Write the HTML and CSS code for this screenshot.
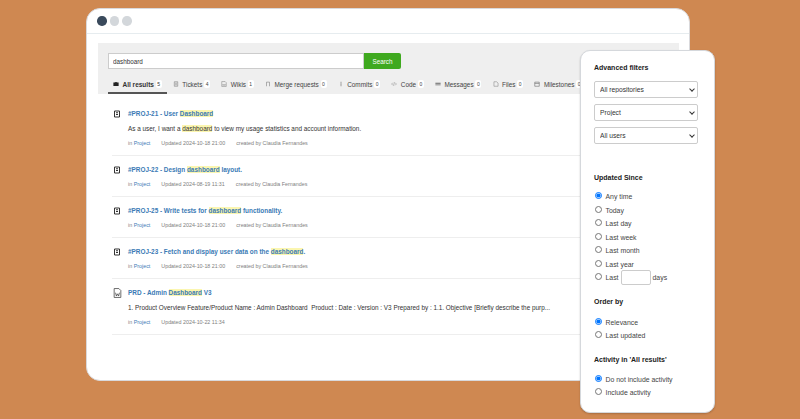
FILE: index.html
```html
<!DOCTYPE html>
<html lang="en">
<head>
    <meta charset="UTF-8">
    <title>Search results</title>
    <link rel="stylesheet" href="styles.css">
</head>
<body>
    <div class="window">
        <div class="titlebar">
            <span class="dot dark"></span>
            <span class="dot"></span>
            <span class="dot"></span>
        </div>
        <div class="content">
            <div class="search-panel">
                <form class="search-form">
                    <input class="search-input" type="text" value="dashboard">
                    <button class="search-button" type="button">Search</button>
                </form>
                <div class="tabs">
                    <a class="tab active">
                        <svg class="tab-icon" viewBox="0 0 16 16"><path fill="#222" d="M5 4V2.500h6V4h4v9.500H1V4zm1.500 0h3V3.500h-3z"/></svg>
                        All results <span class="count">5</span>
                    </a>
                    <a class="tab">
                        <svg class="tab-icon" viewBox="0 0 16 16"><path fill="none" stroke="#777" stroke-width="1.500" d="M3.500 2h9v12h-9zM6 5.500h4M6 8h4M6 10.500h4"/></svg>
                        Tickets <span class="count">4</span>
                    </a>
                    <a class="tab">
                        <svg class="tab-icon" viewBox="0 0 16 16"><path fill="none" stroke="#777" stroke-width="1.300" d="M2 1.500h9l3 3v10H2zM4.500 8l1.300 4L8 9l2.200 3 1.300-4"/></svg>
                        Wikis <span class="count">1</span>
                    </a>
                    <a class="tab">
                        <svg class="tab-icon" viewBox="0 0 16 16"><path fill="none" stroke="#777" stroke-width="1.500" d="M4 14V3h8v11"/></svg>
                        Merge requests <span class="count">0</span>
                    </a>
                    <a class="tab">
                        <svg class="tab-icon" viewBox="0 0 16 16"><path fill="none" stroke="#777" stroke-width="1.800" d="M8 2v4.500M8 9.500V14"/><circle cx="8" cy="8" r="1.500" fill="#777"/></svg>
                        Commits <span class="count">0</span>
                    </a>
                    <a class="tab">
                        <svg class="tab-icon" viewBox="0 0 16 16"><path fill="none" stroke="#888" stroke-width="1.400" d="M5 4.500L1.500 8 5 11.500M11 4.500L14.500 8 11 11.500M9.300 3.500l-2.600 9"/></svg>
                        Code <span class="count">0</span>
                    </a>
                    <a class="tab">
                        <svg class="tab-icon" viewBox="0 0 16 16"><path fill="#666" d="M1 4.500h14v2.500H1zM1 9h14v2.500H1z"/></svg>
                        Messages <span class="count">0</span>
                    </a>
                    <a class="tab">
                        <svg class="tab-icon" viewBox="0 0 16 16"><path fill="none" stroke="#777" stroke-width="1.300" d="M2.500 2h7l4 3.500V14h-11z"/></svg>
                        Files <span class="count">0</span>
                    </a>
                    <a class="tab">
                        <svg class="tab-icon" viewBox="0 0 16 16"><path fill="none" stroke="#666" stroke-width="1.500" d="M2 3h12v11H2zM2 6.500h12"/></svg>
                        Milestones <span class="count">0</span>
                    </a>
                </div>
            </div>

            <div class="results">
                <div class="result">
                    <svg class="result-icon" viewBox="0 0 16 16"><path fill="none" stroke="#333" stroke-width="2" d="M3 2h10v12H3zM6 5.500h4M6 9h4"/></svg>
                    <div class="result-body">
                        <a class="result-title">#PROJ-21 - User <mark>Dashboard</mark></a>
                        <p class="snippet">As a user, I want a <mark>dashboard</mark> to view my usage statistics and account information.</p>
                        <p class="meta"><span>in <a>Project</a></span><span>Updated 2024-10-18 21:00</span><span>created by Claudia Fernandes</span></p>
                    </div>
                </div>
                <div class="result">
                    <svg class="result-icon" viewBox="0 0 16 16"><path fill="none" stroke="#333" stroke-width="2" d="M3 2h10v12H3zM6 5.500h4M6 9h4"/></svg>
                    <div class="result-body">
                        <a class="result-title">#PROJ-22 - Design <mark>dashboard</mark> layout.</a>
                        <p class="meta"><span>in <a>Project</a></span><span>Updated 2024-08-19 11:31</span><span>created by Claudia Fernandes</span></p>
                    </div>
                </div>
                <div class="result">
                    <svg class="result-icon" viewBox="0 0 16 16"><path fill="none" stroke="#333" stroke-width="2" d="M3 2h10v12H3zM6 5.500h4M6 9h4"/></svg>
                    <div class="result-body">
                        <a class="result-title">#PROJ-25 - Write tests for <mark>dashboard</mark> functionality.</a>
                        <p class="meta"><span>in <a>Project</a></span><span>Updated 2024-10-18 21:00</span><span>created by Claudia Fernandes</span></p>
                    </div>
                </div>
                <div class="result">
                    <svg class="result-icon" viewBox="0 0 16 16"><path fill="none" stroke="#333" stroke-width="2" d="M3 2h10v12H3zM6 5.500h4M6 9h4"/></svg>
                    <div class="result-body">
                        <a class="result-title">#PROJ-23 - Fetch and display user data on the <mark>dashboard</mark>.</a>
                        <p class="meta"><span>in <a>Project</a></span><span>Updated 2024-10-18 21:00</span><span>created by Claudia Fernandes</span></p>
                    </div>
                </div>
                <div class="result">
                    <svg class="result-icon wiki-icon" viewBox="0 0 16 18"><path fill="none" stroke="#444" stroke-width="1.400" d="M2 1h8.500L14 4.500V17H2zM4.500 8.500l1.500 6L8 10.500l2 4 1.500-6"/></svg>
                    <div class="result-body">
                        <a class="result-title">PRD - Admin <mark>Dashboard</mark> V3</a>
                        <p class="snippet">1. Product Overview Feature/Product Name : Admin Dashboard&nbsp; Product : Date : Version : V3 Prepared by : 1.1. Objective [Briefly describe the purp...</p>
                        <p class="meta"><span>in <a>Project</a></span><span>Updated 2024-10-22 11:34</span></p>
                    </div>
                </div>
            </div>
        </div>
    </div>

    <aside class="filters">
        <h3 class="filter-title first">Advanced filters</h3>
        <div class="select-wrap"><select class="filter-select"><option>All repositories</option></select></div>
        <div class="select-wrap"><select class="filter-select"><option>Project</option></select></div>
        <div class="select-wrap"><select class="filter-select"><option>All users</option></select></div>

        <h3 class="filter-title since">Updated Since</h3>
        <div class="radio-group">
            <label class="radio"><input type="radio" name="since" checked>Any time</label>
            <label class="radio"><input type="radio" name="since">Today</label>
            <label class="radio"><input type="radio" name="since">Last day</label>
            <label class="radio"><input type="radio" name="since">Last week</label>
            <label class="radio"><input type="radio" name="since">Last month</label>
            <label class="radio"><input type="radio" name="since">Last year</label>
            <label class="radio"><input type="radio" name="since">Last<span class="days-box"></span>days</label>
        </div>

        <h3 class="filter-title order">Order by</h3>
        <div class="radio-group">
            <label class="radio"><input type="radio" name="order" checked>Relevance</label>
            <label class="radio"><input type="radio" name="order">Last updated</label>
        </div>

        <h3 class="filter-title activity">Activity in 'All results'</h3>
        <div class="radio-group">
            <label class="radio"><input type="radio" name="activity" checked>Do not include activity</label>
            <label class="radio"><input type="radio" name="activity">Include activity</label>
        </div>
    </aside>
</body>
</html>
```

FILE: styles.css
```css
* {
    box-sizing: border-box;
    margin: 0;
    padding: 0;
}

html, body {
    height: 100%;
    overflow: hidden;
}

body {
    background-color: #cf8851;
    font-family: "Liberation Sans", Arial, sans-serif;
    color: #333;
    padding: 8px 0 0 86px;
}

.window {
    width: 604px;
    height: 373px;
    background-color: #fff;
    border: 1px solid #d9d9dc;
    border-radius: 14px;
    overflow: hidden;
}

.titlebar {
    height: 25px;
    display: flex;
    align-items: center;
    gap: 3px;
    padding-left: 10px;
    border-bottom: 1px solid #e6ecef;
}

.dot {
    width: 9.500px;
    height: 9.500px;
    border-radius: 50%;
    background-color: #d3d7db;
}

.dot.dark {
    background-color: #3a4a5c;
}

.content {
    padding: 9px 10px 0 11px;
}

.search-panel {
    height: 51px;
    background-color: #efefef;
    padding: 10px 0 0 10px;
    overflow: hidden;
}

.search-form {
    display: flex;
    height: 16px;
}

.search-input {
    width: 256px;
    height: 16px;
    border: 1px solid #ccc;
    background-color: #fff;
    padding: 0 4px;
    font-family: inherit;
    font-size: 6.300px;
    color: #333;
}

.search-button {
    width: 37px;
    height: 16px;
    border: none;
    border-radius: 0 2px 2px 0;
    background-color: #3fa91f;
    color: #fff;
    font-family: inherit;
    font-size: 6.300px;
}

.tabs {
    display: flex;
    height: 25px;
    white-space: nowrap;
}

.tab {
    display: flex;
    align-items: center;
    gap: 3.500px;
    padding: 7px 5px 0;
    margin-right: 1.200px;
    font-size: 6.400px;
    color: #444;
    border-bottom: 2px solid transparent;
}

.tab.active {
    font-size: 6.500px;
    font-weight: bold;
    color: #333;
    border-bottom-color: #555;
}

.tab-icon {
    width: 6px;
    height: 6px;
    flex-shrink: 0;
}

.count {
    min-width: 6px;
    margin-left: -1.800px;
    background-color: #fff;
    border-radius: 2px;
    font-size: 5px;
    font-weight: normal;
    text-align: center;
    line-height: 8px;
}

.results {
    padding: 14px 0 0 14px;
}

.result {
    display: flex;
    gap: 7px;
    padding-bottom: 5px;
    margin-bottom: 8px;
    border-bottom: 1px solid #eee;
}

.result-icon {
    width: 8px;
    height: 8px;
    margin: 2px 0 0 1px;
    flex-shrink: 0;
}

.wiki-icon {
    width: 9px;
    height: 10px;
    margin: 1px -1px 0 1px;
}

.result-body {
    flex: 1;
}

.result-title {
    display: block;
    height: 13px;
    line-height: 12px;
    font-size: 6.400px;
    font-weight: bold;
    color: #3a7ab5;
}

mark {
    background-color: #fbf6b0;
    color: inherit;
}

.snippet {
    height: 15px;
    line-height: 15px;
    font-size: 6.380px;
    color: #333;
    white-space: nowrap;
}

.meta {
    display: flex;
    gap: 11px;
    height: 14px;
    line-height: 14px;
    font-size: 5.350px;
    color: #808080;
}

.meta a {
    color: #3a7ab5;
}

.filters {
    position: absolute;
    left: 580px;
    top: 50px;
    width: 135px;
    height: 363px;
    background-color: #fff;
    border: 1px solid #d5d8dc;
    border-radius: 10px;
    padding: 11px 13px 0 13px;
    box-shadow: 0 1px 2px rgba(0, 0, 0, 0.2);
}

.filter-title {
    font-size: 7px;
    line-height: 10px;
    font-weight: bold;
    color: #222;
}

.select-wrap {
    position: relative;
    width: 104px;
    margin-bottom: 6px;
}

.select-wrap::after {
    content: "";
    position: absolute;
    right: 4px;
    top: 6px;
    width: 3px;
    height: 3px;
    border-right: 1.200px solid #333;
    border-bottom: 1.200px solid #333;
    transform: rotate(45deg);
}

.filter-select {
    display: block;
    width: 104px;
    height: 17px;
    appearance: none;
    font-family: inherit;
    font-size: 6.700px;
    color: #333;
    background-color: #fff;
    border: 1px solid #ccc;
    border-radius: 2px;
    padding-left: 5px;
}

.first {
    margin-top: 1px;
    margin-bottom: 8px;
}

.since {
    margin-top: 29px;
    margin-bottom: 7px;
}

.order {
    margin-top: 12.500px;
    margin-bottom: 8.500px;
}

.activity {
    margin-top: 12.500px;
    margin-bottom: 7.500px;
}

.radio-group {
    display: flex;
    flex-direction: column;
}

.radio {
    display: flex;
    align-items: center;
    height: 13.500px;
    font-size: 6.900px;
    color: #444;
}

.radio input {
    width: 7px;
    height: 7px;
    margin: 0 4px 2px 0.500px;
}

.days-box {
    width: 30px;
    height: 15px;
    margin: 0 2px;
    border: 1px solid #ccc;
    border-radius: 2px;
    flex-shrink: 0;
}
```
